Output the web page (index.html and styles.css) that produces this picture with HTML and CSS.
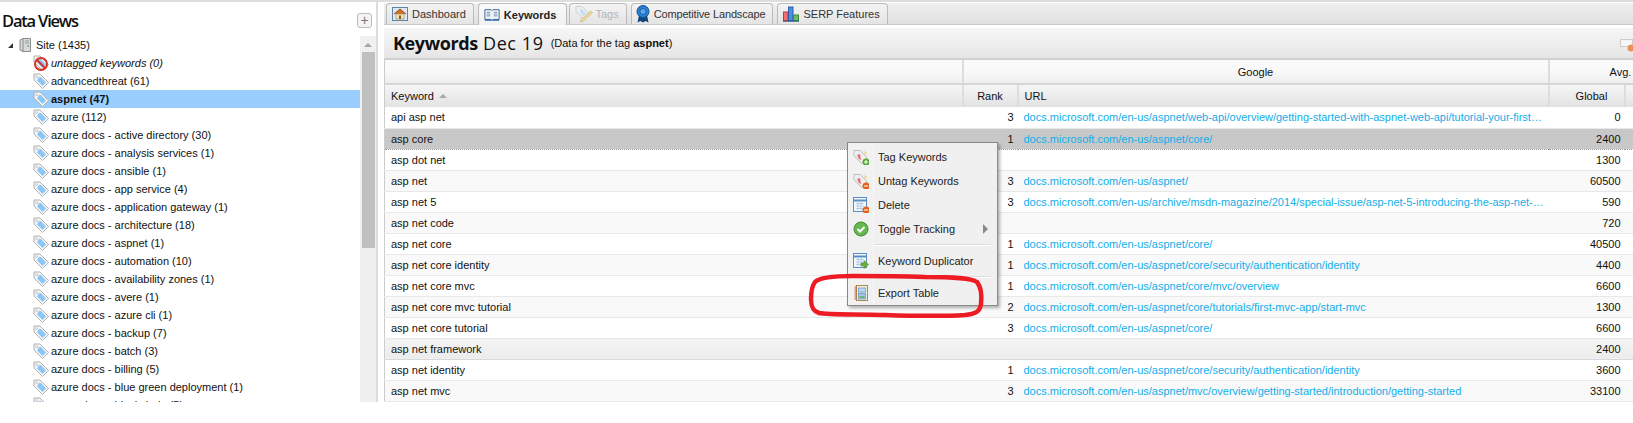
FILE: index.html
```html
<!DOCTYPE html>
<html>
	<head>
		<meta charset="utf-8">
		<title>Keywords</title>
		<link rel="stylesheet" href="styles.css">
	</head>
	<body>
		<svg class="defs" width="0" height="0">
			<symbol id="tag" viewBox="0 0 16 16">
				<path d="M1 1h6l8.500 8.500-6 6-8.500-8.500z" fill="#f6f6f6" stroke="#b0b0b0"/>
				<path d="M6 4h2l5 5.500-3.500 3.500-5.500-5.500z" fill="#8cc6f7"/>
				<circle cx="3.700" cy="3.700" r="1" fill="#fff" stroke="#aaa" stroke-width=".6"/>
			</symbol>
			<symbol id="notag" viewBox="0 0 16 16">
				<path d="M1 1h6l8.500 8.500-6 6-8.500-8.500z" fill="#f6f6f6" stroke="#b0b0b0"/>
				<path d="M6 4h2l5 5.500-3.500 3.500-5.500-5.500z" fill="#8cc6f7"/>
				<circle cx="8" cy="9" r="6" fill="none" stroke="#d8312a" stroke-width="2"/>
				<path d="M4 5l8 8" stroke="#d8312a" stroke-width="2"/>
			</symbol>
			<symbol id="server" viewBox="0 0 12 14">
				<path d="M1 2l3-1.500h7.500v13H4l-3-1.500z" fill="#d9d9d9" stroke="#8a8a8a"/>
				<path d="M4 .5v13" stroke="#8a8a8a"/>
				<path d="M6 3h4M6 5h4" stroke="#999"/>
				<path d="M8 8h2" stroke="#3a3"/>
			</symbol>
			<symbol id="home" viewBox="0 0 16 16">
				<rect x=".5" y="1.500" width="15" height="13" fill="#dce9f5" stroke="#5a85ad"/>
				<path d="M2 8l6-5 6 5" fill="#c9702a" stroke="#a5541c"/>
				<rect x="4" y="8" width="8" height="5" fill="#f2e3b8" stroke="#a08a50" stroke-width=".6"/>
				<rect x="7" y="9.500" width="2" height="3.500" fill="#8a5a2a"/>
			</symbol>
			<symbol id="book" viewBox="0 0 18 16">
				<path d="M1 2h7l1 1 1-1h7v11h-7l-1 1-1-1H1z" fill="#eef3f8" stroke="#2c5a86"/>
				<path d="M3 5h4M3 7h4M3 9h4M11 5h4M11 7h4M11 9h4" stroke="#6a8db0"/>
				<path d="M1 13h7l1 1.500 1-1.500h7v1.500H1z" fill="#2c6aa4"/>
			</symbol>
			<symbol id="pencil" viewBox="0 0 18 18">
				<path d="M1 1.500h6l7 7-5.500 5.500-7.500-7.500z" fill="#f0f0f0" stroke="#ccc"/>
				<path d="M5 4h2l4.500 4.500-3 3L5 7.500z" fill="#c6dff5"/>
				<path d="M16 6l1.500 1.500-9 8.500-3 1 1-3z" fill="#ecd9a0" stroke="#c8b47c" stroke-width=".7"/>
			</symbol>
			<symbol id="ribbon" viewBox="0 0 14 18">
				<path d="M3 10l-1.500 7.500 3-1.500 2.500 1.500 2.500-1.500 3 1.500L11 10z" fill="#12457e"/>
				<circle cx="7" cy="6.500" r="6" fill="#2a7fd6" stroke="#14508f"/>
				<circle cx="7" cy="6.500" r="3" fill="#5aa8ef" stroke="#14508f" stroke-width=".7"/>
			</symbol>
			<symbol id="bars" viewBox="0 0 16 15">
				<rect x=".5" y="5.500" width="4.500" height="9" fill="#f56d6d" stroke="#c43636"/>
				<rect x="5.500" y=".5" width="4.500" height="14" fill="#4f8fe0" stroke="#2a5ea8"/>
				<rect x="10.500" y="8.500" width="5" height="6" fill="#6dbb6d" stroke="#3a8a3a"/>
				<path d="M0 14.500h16" stroke="#26507e"/>
			</symbol>
			<symbol id="tagplus" viewBox="0 0 16 16">
				<path d="M1 1.500h6l7 7-5.500 6-7.500-8z" fill="#f0f0f0" stroke="#bbb"/>
				<path d="M4 6l3-1 1 6-2-1z" fill="#ee6b6b"/>
				<path d="M10 1l4 3-2 3z" fill="#ecd9a0"/>
			</symbol>
			<symbol id="grid" viewBox="0 0 16 16">
				<rect x=".5" y=".5" width="13" height="14" fill="#f4f8fc" stroke="#5a8fc4"/>
				<path d="M.5 3.500h13" stroke="#5a8fc4" stroke-width="2"/>
				<path d="M3 6.500h8M3 9h8M3 11.500h8M5 5v8M8 5v8" stroke="#a8c4e0" stroke-width=".8"/>
			</symbol>
			<symbol id="save" viewBox="0 0 15 16">
				<rect x="3" y=".5" width="11" height="15" fill="#f5f0dc" stroke="#a88a50"/>
				<path d="M1 2h2M1 4h2M1 6h2M1 8h2M1 10h2M1 12h2M1 14h2" stroke="#c0502a"/>
				<rect x="5" y="3" width="7" height="4" fill="#bcd8f4" stroke="#5a8fc4" stroke-width=".7"/>
				<rect x="5" y="8.500" width="7" height="5.500" fill="#9fc7ee" stroke="#5a8fc4" stroke-width=".7"/>
				<path d="M6 12h5" stroke="#6cb86c" stroke-width="2"/>
			</symbol>
		</svg>

		<div class="page">
			<div class="views">
				<div class="views-head">
					<h2>Data Views</h2>
					<span class="add">+</span>
				</div>
				<div class="views-body">
					<ul class="tree">
						<li class="site"><span class="arrow"></span><svg class="ico-server"><use href="#server"/></svg>Site (1435)</li>
						<li class="none"><svg class="ico-tag"><use href="#notag"/></svg>untagged keywords (0)</li>
						<li><svg class="ico-tag"><use href="#tag"/></svg>advancedthreat (61)</li>
						<li class="sel"><svg class="ico-tag"><use href="#tag"/></svg>aspnet (47)</li>
						<li><svg class="ico-tag"><use href="#tag"/></svg>azure (112)</li>
						<li><svg class="ico-tag"><use href="#tag"/></svg>azure docs - active directory (30)</li>
						<li><svg class="ico-tag"><use href="#tag"/></svg>azure docs - analysis services (1)</li>
						<li><svg class="ico-tag"><use href="#tag"/></svg>azure docs - ansible (1)</li>
						<li><svg class="ico-tag"><use href="#tag"/></svg>azure docs - app service (4)</li>
						<li><svg class="ico-tag"><use href="#tag"/></svg>azure docs - application gateway (1)</li>
						<li><svg class="ico-tag"><use href="#tag"/></svg>azure docs - architecture (18)</li>
						<li><svg class="ico-tag"><use href="#tag"/></svg>azure docs - aspnet (1)</li>
						<li><svg class="ico-tag"><use href="#tag"/></svg>azure docs - automation (10)</li>
						<li><svg class="ico-tag"><use href="#tag"/></svg>azure docs - availability zones (1)</li>
						<li><svg class="ico-tag"><use href="#tag"/></svg>azure docs - avere (1)</li>
						<li><svg class="ico-tag"><use href="#tag"/></svg>azure docs - azure cli (1)</li>
						<li><svg class="ico-tag"><use href="#tag"/></svg>azure docs - backup (7)</li>
						<li><svg class="ico-tag"><use href="#tag"/></svg>azure docs - batch (3)</li>
						<li><svg class="ico-tag"><use href="#tag"/></svg>azure docs - billing (5)</li>
						<li><svg class="ico-tag"><use href="#tag"/></svg>azure docs - blue green deployment (1)</li>
						<li><svg class="ico-tag"><use href="#tag"/></svg>azure docs - blockchain (5)</li>
					</ul>
					<div class="scroll">
						<span class="scroll-up"></span>
						<span class="thumb"></span>
					</div>
				</div>
			</div>

			<div class="report">
				<div class="tabs">
					<a class="tab tab-dash"><svg class="ico-tab"><use href="#home"/></svg>Dashboard</a>
					<a class="tab tab-kw on"><svg class="ico-tab"><use href="#book"/></svg>Keywords</a>
					<a class="tab tab-tags off"><svg class="ico-tab"><use href="#pencil"/></svg>Tags</a>
					<a class="tab tab-comp"><svg class="ico-tab"><use href="#ribbon"/></svg>Competitive Landscape</a>
					<a class="tab tab-serp"><svg class="ico-tab"><use href="#bars"/></svg>SERP Features</a>
				</div>
				<div class="title">
					<h1><b>Keywords</b> Dec 19</h1>
					<span class="note">(Data for the tag <b>aspnet</b>)</span>
					<svg class="title-ico" width="15" height="13">
						<rect x=".5" y=".5" width="12" height="7" fill="#f6f6f6" stroke="#ccc"/>
						<circle cx="11" cy="9" r="3.500" fill="#e8925c"/>
					</svg>
				</div>
				<table class="kw">
					<colgroup>
						<col class="c-kw"><col class="c-rank"><col class="c-url"><col class="c-vol"><col class="c-rest">
					</colgroup>
					<thead>
						<tr class="group">
							<th></th>
							<th colspan="2">Google</th>
							<th colspan="2" class="g-avg">Avg.</th>
						</tr>
						<tr class="cols">
							<th class="left">Keyword <span class="sort"></span></th>
							<th class="mid">Rank</th>
							<th class="left">URL</th>
							<th class="mid vol">Global</th>
							<th></th>
						</tr>
					</thead>
					<tbody>
						<tr><td>api asp net</td><td class="num">3</td><td class="url">docs.microsoft.com/en-us/aspnet/web-api/overview/getting-started-with-aspnet-web-api/tutorial-your-first-web-api-in-aspnet</td><td class="num">0</td><td></td></tr>
						<tr class="picked"><td>asp core</td><td class="num">1</td><td class="url">docs.microsoft.com/en-us/aspnet/core/</td><td class="num">2400</td><td></td></tr>
						<tr><td>asp dot net</td><td class="num"></td><td class="url"></td><td class="num">1300</td><td></td></tr>
						<tr><td>asp net</td><td class="num">3</td><td class="url">docs.microsoft.com/en-us/aspnet/</td><td class="num">60500</td><td></td></tr>
						<tr><td>asp net 5</td><td class="num">3</td><td class="url">docs.microsoft.com/en-us/archive/msdn-magazine/2014/special-issue/asp-net-5-introducing-the-asp-net-5-preview</td><td class="num">590</td><td></td></tr>
						<tr><td>asp net code</td><td class="num"></td><td class="url"></td><td class="num">720</td><td></td></tr>
						<tr><td>asp net core</td><td class="num">1</td><td class="url">docs.microsoft.com/en-us/aspnet/core/</td><td class="num">40500</td><td></td></tr>
						<tr><td>asp net core identity</td><td class="num">1</td><td class="url">docs.microsoft.com/en-us/aspnet/core/security/authentication/identity</td><td class="num">4400</td><td></td></tr>
						<tr><td>asp net core mvc</td><td class="num">1</td><td class="url">docs.microsoft.com/en-us/aspnet/core/mvc/overview</td><td class="num">6600</td><td></td></tr>
						<tr><td>asp net core mvc tutorial</td><td class="num">2</td><td class="url">docs.microsoft.com/en-us/aspnet/core/tutorials/first-mvc-app/start-mvc</td><td class="num">1300</td><td></td></tr>
						<tr><td>asp net core tutorial</td><td class="num">3</td><td class="url">docs.microsoft.com/en-us/aspnet/core/</td><td class="num">6600</td><td></td></tr>
						<tr class="grey"><td>asp net framework</td><td class="num"></td><td class="url"></td><td class="num">2400</td><td></td></tr>
						<tr><td>asp net identity</td><td class="num">1</td><td class="url">docs.microsoft.com/en-us/aspnet/core/security/authentication/identity</td><td class="num">3600</td><td></td></tr>
						<tr><td>asp net mvc</td><td class="num">3</td><td class="url">docs.microsoft.com/en-us/aspnet/mvc/overview/getting-started/introduction/getting-started</td><td class="num">33100</td><td></td></tr>
					</tbody>
				</table>
			</div>
		</div>

		<div class="menu">
			<div class="mi"><svg class="ico-mi"><use href="#tagplus"/><circle cx="13" cy="13" r="3.500" fill="#5aa83a"/><path d="M11 13h4M13 11v4" stroke="#fff"/></svg>Tag Keywords</div>
			<div class="mi"><svg class="ico-mi"><use href="#tagplus"/><circle cx="13" cy="13" r="3.500" fill="#e0641e"/><path d="M11 13h4" stroke="#fff"/></svg>Untag Keywords</div>
			<div class="mi"><svg class="ico-mi"><use href="#grid"/><circle cx="13" cy="13" r="3.500" fill="#e0641e"/><path d="M11 13h4" stroke="#fff"/></svg>Delete</div>
			<div class="mi"><svg class="ico-mi"><circle cx="8" cy="8" r="7" fill="#63b84f" stroke="#3d8a33"/><path d="M4.500 8l2.500 2.500 4.500-4.500" fill="none" stroke="#fff" stroke-width="2"/></svg>Toggle Tracking<span class="more"></span></div>
			<div class="sep"></div>
			<div class="mi"><svg class="ico-mi"><use href="#grid"/><path d="M8 10h3V7.500l4.500 4-4.500 4V13H8z" fill="#6cb03c" stroke="#4a8a2a" stroke-width=".6"/></svg>Keyword Duplicator</div>
			<div class="sep"></div>
			<div class="mi"><svg class="ico-mi"><use href="#save"/></svg>Export Table</div>
		</div>
		<svg class="ring" width="182" height="50" viewBox="0 0 182 50">
			<path d="M48 5C26 5 14 7 10 11 7 15 6 20 6 28 6 36 8 40 14 42 24 44 50 43 80 44 110 45 144 45 160 44 170 43 175 41 176 33 177 24 176 16 172 11 166 7 150 6 120 6 90 5 70 5 48 5Z" fill="none" stroke="#ed1c24" stroke-width="4.500"/>
		</svg>
	</body>
</html>
```
FILE: styles.css
```css
* {
	margin: 0;
	padding: 0;
	box-sizing: border-box;
}

html, body {
	height: 100%;
	overflow: hidden;
	background: #fff;
}

body {
	font-family: "Liberation Sans", Arial, sans-serif;
	font-size: 11px;
	color: #111;
}

.defs {
	position: absolute;
}

.page {
	display: flex;
	height: 402px;
	border-top: 2px solid #ddd;
}

/* left side */
.views {
	width: 378px;
	flex: none;
	border-right: 2px solid #ddd;
	display: flex;
	flex-direction: column;
}

.views-head {
	height: 34px;
	flex: none;
	display: flex;
	align-items: center;
	justify-content: space-between;
	padding: 2px 4px 0 2px;
}

.views-head h2 {
	font-family: "Open Sans", sans-serif;
	font-size: 16.500px;
	font-weight: 600;
	letter-spacing: -1.200px;
	color: #111;
}

.add {
	width: 15px;
	height: 15px;
	border: 1px solid #bbb;
	border-radius: 3px;
	background: #f4f4f4;
	color: #777;
	font-size: 14px;
	line-height: 12px;
	text-align: center;
}

.views-body {
	flex: 1;
	display: flex;
	overflow: hidden;
}

.tree {
	list-style: none;
	width: 360px;
	flex: none;
}

.tree li {
	height: 18px;
	line-height: 18px;
	display: flex;
	align-items: center;
	padding-left: 33px;
	white-space: nowrap;
}

.tree li.site {
	padding-left: 8px;
}

.tree li.none {
	font-style: italic;
}

.tree li.sel {
	background: #99ceff;
	font-weight: bold;
}

.arrow {
	width: 0;
	height: 0;
	border-left: 5px solid transparent;
	border-bottom: 5px solid #333;
	margin-right: 6px;
}

.ico-server {
	width: 12px;
	height: 14px;
	margin-right: 5px;
}

.ico-tag {
	width: 16px;
	height: 16px;
	margin-right: 2px;
	margin-top: -1px;
}

.scroll {
	width: 16px;
	background: #f0f0f0;
	display: flex;
	flex-direction: column;
	align-items: center;
}

.scroll-up {
	width: 0;
	height: 0;
	margin: 7px 0 5px;
	border-left: 4px solid transparent;
	border-right: 4px solid transparent;
	border-bottom: 4px solid #a6a6a6;
}

.thumb {
	width: 13px;
	height: 196px;
	background: #c0c0c0;
}

/* right side */
.report {
	flex: 1;
	min-width: 0;
	margin-left: 6px;
}

.tabs {
	height: 22px;
	margin-top: 1px;
	display: flex;
	gap: 4px;
	padding-left: 2px;
	background: linear-gradient(#f0f0f0, #e0e0e0);
	border-bottom: 1px solid #c8c8c8;
}

.tab {
	height: 21px;
	display: flex;
	align-items: center;
	gap: 4px;
	padding: 0 7px 0 5px;
	border: 1px solid #bbb;
	border-bottom: 0;
	border-radius: 4px 4px 0 0;
	background: linear-gradient(#f4f4f4, #e4e4e4);
	color: #333;
}

.tab.on {
	height: 22px;
	margin-right: -2px;
	padding-right: 10px;
	background: linear-gradient(#fafafa, #f0f0f0);
	font-weight: bold;
	color: #222;
}

.tab.off {
	color: #b4b4b4;
}

.ico-tab {
	width: 16px;
	height: 16px;
}

.tab-tags .ico-tab {
	width: 18px;
	height: 18px;
	margin-right: -2px;
}

.tab-comp {
	padding-left: 4px;
	letter-spacing: -0.150px;
}

.tab-comp .ico-tab {
	width: 14px;
	height: 18px;
}

.title {
	height: 32px;
	margin-top: 3px;
	display: flex;
	align-items: center;
	gap: 7px;
	padding-left: 9px;
	background: linear-gradient(#f6f6f6, #e6e6e6);
	border-bottom: 2px solid #d0d0d0;
	overflow: hidden;
	position: relative;
}

.title h1 {
	font-family: "Open Sans", sans-serif;
	font-size: 18px;
	font-weight: 400;
	letter-spacing: 0.600px;
	color: #111;
}

.title h1 b {
	letter-spacing: -0.400px;
}

.title-ico {
	position: absolute;
	right: -2px;
	top: 11px;
}

.kw {
	width: 1249px;
	table-layout: fixed;
	border-collapse: collapse;
	border-left: 1px solid #ccc;
}

.c-kw { width: 578px; }
.c-rank { width: 55px; }
.c-url { width: 531px; }
.c-vol { width: 76px; }
.c-rest { width: 9px; }

.kw th {
	font-weight: normal;
	border-right: 2px solid #ddd;
}

.group th {
	height: 24px;
	background: linear-gradient(#fafafa 40%, #efefef);
	border-bottom: 2px solid #d6d6d6;
}

.g-avg {
	text-align: left;
	padding-left: 60px;
}

.cols th {
	height: 23px;
	background: linear-gradient(#f6f6f6, #e2e2e2);
}

.kw .left {
	text-align: left;
	padding-left: 6px;
}

.kw .mid {
	text-align: center;
}

.kw .vol {
	padding-left: 10px;
}

.sort {
	display: inline-block;
	width: 0;
	height: 0;
	margin: 0 0 2px 2px;
	border-left: 4px solid transparent;
	border-right: 4px solid transparent;
	border-bottom: 4px solid #aaa;
}

.kw td {
	height: 21px;
	padding: 0 5px 0 6px;
	background: #fff;
	border-bottom: 1px solid #e8e8e8;
	white-space: nowrap;
	overflow: hidden;
	text-overflow: ellipsis;
}

.kw tbody tr:nth-child(even) td {
	background: #f9f9f9;
}

.kw td.num {
	text-align: right;
	padding-right: 4px;
}

.kw td.url {
	color: #12aeea;
	padding-left: 6px;
	padding-right: 4px;
}

.kw tbody tr.picked td {
	background: #c8c8c8;
	border-top: 1px dotted #999;
	border-bottom: 1px dotted #999;
}

.kw tbody tr.grey td {
	background: linear-gradient(#f4f4f4, #ececec);
	border-top: 1px solid #d8d8d8;
	border-bottom: 1px solid #d8d8d8;
}

/* context menu */
.menu {
	position: absolute;
	left: 847px;
	top: 142px;
	width: 151px;
	height: 164px;
	padding: 2px;
	border: 1px solid #8a8a8a;
	background: linear-gradient(to right, #f1f1f1 24px, #e2e2e2 24px, #fff 25px, #f0f0f0 26px);
	box-shadow: 2px 2px 3px rgba(0, 0, 0, 0.3);
	color: #222;
}

.mi {
	height: 24px;
	display: flex;
	align-items: center;
	position: relative;
	padding-left: 3px;
}

.ico-mi {
	width: 16px;
	height: 16px;
	margin-right: 9px;
}

.more {
	position: absolute;
	right: 7px;
	top: 7px;
	width: 0;
	height: 0;
	border-top: 5px solid transparent;
	border-bottom: 5px solid transparent;
	border-left: 5px solid #888;
}

.sep {
	height: 8px;
	margin-left: 25px;
	margin-right: 4px;
	background: linear-gradient(#f0f0f0 3px, #ddd 3px, #ddd 4px, #fff 4px, #fff 5px, #f0f0f0 5px);
}

.ring {
	position: absolute;
	left: 805px;
	top: 271px;
}
```
